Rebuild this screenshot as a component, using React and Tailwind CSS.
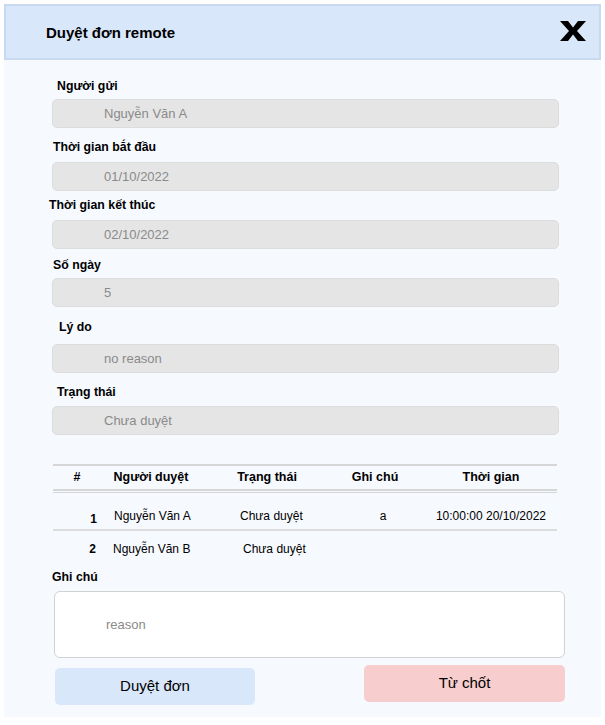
const fields = [
  { label: 'Người gửi', value: 'Nguyễn Văn A', mt: 'mt-[19px]', ml: 'ml-[5px]', mb: 'mb-[5px]' },
  { label: 'Thời gian bắt đầu', value: '01/10/2022', mt: 'mt-[12px]', ml: 'ml-[1px]', mb: 'mb-[7px]' },
  { label: 'Thời gian kết thúc', value: '02/10/2022', mt: 'mt-[7px]', ml: 'ml-[-3px]', mb: 'mb-[7px]' },
  { label: 'Số ngày', value: '5', mt: 'mt-[9px]', ml: 'ml-[1px]', mb: 'mb-[5px]' },
  { label: 'Lý do', value: 'no reason', mt: 'mt-[13px]', ml: 'ml-[7px]', mb: 'mb-[9px]' },
  { label: 'Trạng thái', value: 'Chưa duyệt', mt: 'mt-[12px]', ml: 'ml-[5px]', mb: 'mb-[6px]' },
];

const approvers = [
  { no: '1', name: 'Nguyễn Văn A', status: 'Chưa duyệt', note: 'a', time: '10:00:00 20/10/2022' },
  { no: '2', name: 'Nguyễn Văn B', status: 'Chưa duyệt', note: '', time: '' },
];

const cols = 'grid grid-cols-[48px_100px_132px_92px_132px]';

function CloseIcon() {
  return (
    <svg width="26" height="20" viewBox="0 0 26 20">
      <path d="M0 0h8l5 6.5L18 0h8l-9 10 9 10h-8l-5-6.5L8 20H0l9-10z" fill="#000" />
    </svg>
  );
}

export default function App() {
  return (
    <div className="min-h-screen bg-white pt-[4px] pl-[4px] font-['Liberation_Sans',Arial,sans-serif] text-black">
      <div className="w-[597px] bg-[#f6f9fe] pb-[12px]">
        <div className="flex h-[56px] items-center justify-between border-2 border-[#c9d9f0] bg-[#d9e7fa] pl-[40px] pr-[13px]">
          <h2 className="pt-[3px] text-[15px] font-bold">Duyệt đơn remote</h2>
          <button className="mb-[2px]">
            <CloseIcon />
          </button>
        </div>

        <div className="pl-[48px] pr-[42px]">
          {fields.map((f) => (
            <div key={f.label} className={f.mt}>
              <div className={`${f.ml} ${f.mb} text-[12.3px] font-bold leading-[15px]`}>{f.label}</div>
              <div className="flex h-[29px] items-center rounded-[5px] border border-[#dcdcdc] bg-[#e5e5e5] pl-[51px] text-[13px] text-[#8a8a8a]">
                {f.value}
              </div>
            </div>
          ))}

          <div className="mt-[29px] ml-[1px] w-[504px] text-[12px]">
            <div className={`${cols} h-[27px] items-center border-t-2 border-b-2 border-[#d6d6d6] text-[12.5px] font-bold`}>
              <div className="text-center">#</div>
              <div className="text-center">Người duyệt</div>
              <div className="text-center">Trạng thái</div>
              <div className="text-center pr-[8px]">Ghi chú</div>
              <div className="text-center">Thời gian</div>
            </div>
            <div className="h-[1px]" />
            <div className="border-t border-[#d6d6d6]">
              {approvers.map((a, i) => (
                <div
                  key={a.no}
                  className={`${cols} ${i === 0 ? 'h-[38px] items-end pb-[4px] border-b-2 border-[#dcdcdc]' : 'h-[30px] items-start pt-[9px]'}`}
                >
                  <div className={`text-right font-bold ${i === 0 ? 'pr-[4px] translate-y-[3px]' : 'pr-[5px]'}`}>{a.no}</div>
                  <div className={i === 0 ? 'pl-[13px]' : 'pl-[12px]'}>{a.name}</div>
                  <div className={i === 0 ? 'pl-[39px]' : 'pl-[42px]'}>{a.status}</div>
                  <div className="text-center pl-[8px]">{a.note}</div>
                  <div className="text-center">{a.time}</div>
                </div>
              ))}
            </div>
          </div>

          <div className="mt-[9px] text-[12.3px] font-bold leading-[15px]">Ghi chú</div>
          <div className="mt-[6px] ml-[2px] mr-[-6px] flex h-[67px] items-center rounded-[6px] border border-[#d2d2d2] bg-white pl-[51px] text-[13px] text-[#8a8a8a]">
            reason
          </div>

          <div className="mt-[7px] ml-[3px] mr-[-6px] flex items-start justify-between">
            <button className="mt-[3px] h-[37px] w-[200px] rounded-[5px] bg-[#d9e7fa] text-[15px]">Duyệt đơn</button>
            <button className="h-[37px] w-[201px] rounded-[5px] bg-[#f7cdcd] pb-[1px] text-[15px]">Từ chốt</button>
          </div>
        </div>
      </div>
    </div>
  );
}
